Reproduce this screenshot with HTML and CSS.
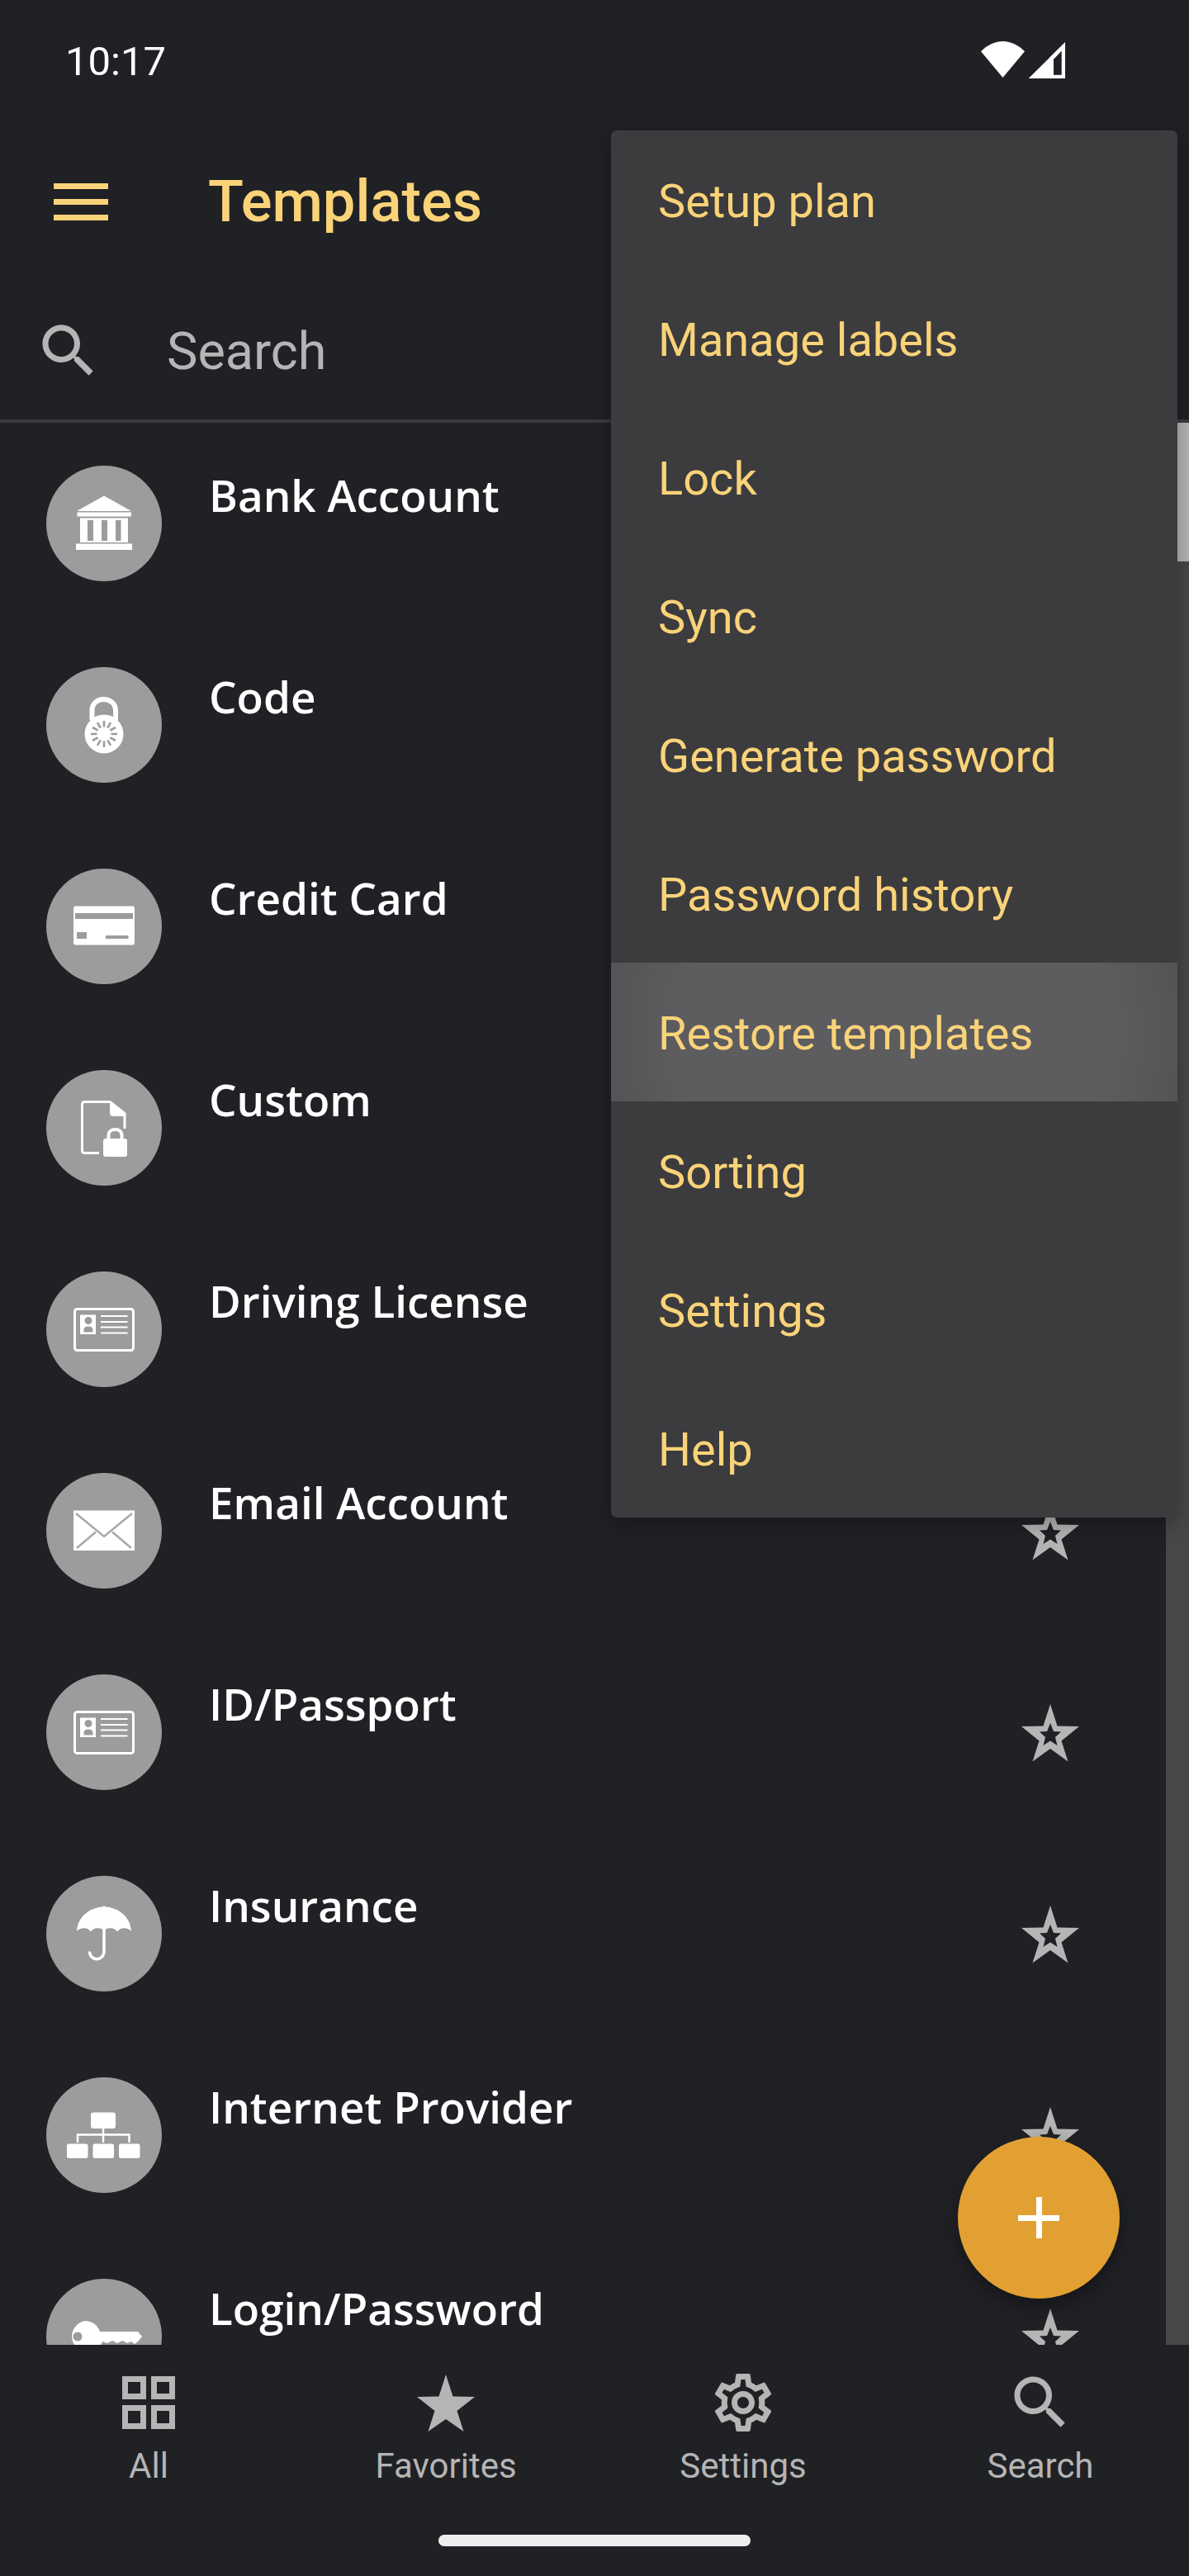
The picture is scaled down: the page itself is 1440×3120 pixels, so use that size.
FILE: index.html
```html
<!DOCTYPE html>
<html lang="en">
<head>
<meta charset="utf-8">
<title>Templates</title>
<link rel="stylesheet" href="styles.css">
</head>
<body>
<svg class="defs" width="0" height="0" aria-hidden="true">
  <symbol id="star-o" viewBox="0 0 70 70">
    <path fill-rule="evenodd" d="M35 0 43.5 26.5 70 27 48.5 44.5 56.5 69.5 35 54 13.5 69.5 21.5 44.5 0 27 26.5 26.5ZM35 23 31 33 22 33.5 29 40 26.5 50 35 44.5 43.5 50 41 40 48 33.5 39 33Z"/>
  </symbol>
  <symbol id="idcard" viewBox="0 0 140 140">
    <rect x="34.5" y="45.5" width="71" height="50" rx="3" fill="none" stroke="#fff" stroke-width="3"/>
    <rect x="41" y="52.5" width="19" height="23.5" fill="#fff"/>
    <circle cx="51" cy="59.5" r="4.5" fill="#9c9c9c"/>
    <path d="M45.5 73.5v-3c0-2.500 2.500-4 5.500-4s5.500 1.500 5.500 4v3z" fill="#9c9c9c"/>
    <path d="M66 54h32.500M66 61h32.500M66 67.500h32.500M66 74.500h32.500" stroke="#fff" stroke-width="2.200" fill="none"/>
  </symbol>
</svg>

<div class="app">
  <div class="statusbar">
    <span class="time">10:17</span>
    <svg class="status-icons" width="104" height="46" viewBox="0 0 104 46">
      <path d="M2 12.300C9 5 18.500 0 28.500 0S48 5 55 12.300L28.500 44Z" fill="#fff"/>
      <path fill-rule="evenodd" d="M59.700 45 104 1V45ZM90 21.700V40.700H99.700V11.700Z" fill="#fff"/>
    </svg>
  </div>

  <header class="toolbar">
    <span class="hamburger"><i></i><i></i><i></i></span>
    <h1 class="title">Templates</h1>
  </header>

  <div class="searchbar">
    <svg class="search-icon" width="84" height="84" viewBox="0 0 24 24"><path d="M15.500 14h-.79l-.28-.27C15.410 12.590 16 11.110 16 9.500 16 5.910 13.090 3 9.500 3S3 5.910 3 9.500 5.910 16 9.500 16c1.610 0 3.090-.59 4.230-1.570l.27.28v.79l5 4.990L20.490 19l-4.990-5zm-6 0C7.010 14 5 11.990 5 9.500S7.010 5 9.500 5 14 7.010 14 9.500 11.990 14 9.500 14z"/></svg>
    <span class="search-text">Search</span>
  </div>

  <main class="list">
    <div class="scrolltrack"><div class="scrollthumb"></div></div>

    <div class="row">
      <span class="avatar"><svg width="140" height="140" viewBox="0 0 140 140">
        <path d="M70 36.500 103 55H37Z" fill="#fff"/>
        <rect x="37.500" y="56.500" width="65.500" height="5" fill="#fff"/>
        <path d="M41 63.500H99V93H41ZM50 66V91H57V66ZM67 66V91H74V66ZM84 66V91H90.500V66Z" fill="#fff" fill-rule="evenodd"/>
        <rect x="36" y="94.500" width="68" height="7.500" fill="#fff"/>
      </svg></span>
      <span class="name">Bank Account</span>
      <svg class="star" width="70" height="70"><use href="#star-o"/></svg>
    </div>

    <div class="row">
      <span class="avatar"><svg width="140" height="140" viewBox="0 0 140 140">
        <path d="M55.500 64V52.500C55.500 44 62 39 69.500 39S84 44 84 52.500V64" fill="none" stroke="#fff" stroke-width="6"/>
        <circle cx="70" cy="81" r="23.500" fill="#fff"/>
        <g stroke="#9c9c9c" stroke-width="2.600" fill="none">
          <path d="M70 65v7.500M70 89.500V97M54 81h7.500M78.500 81H86M62 67.100l3.700 6.500M74.300 88.400l3.700 6.500M56.100 73l6.500 3.700M77.400 85.300l6.500 3.700M78 67.100l-3.700 6.500M65.700 88.400 62 94.900M83.900 73l-6.500 3.700M62.600 85.300 56.100 89"/>
        </g>
      </svg></span>
      <span class="name">Code</span>
      <svg class="star" width="70" height="70"><use href="#star-o"/></svg>
    </div>

    <div class="row">
      <span class="avatar"><svg width="140" height="140" viewBox="0 0 140 140">
        <rect x="33" y="45.500" width="74" height="47" rx="2.500" fill="#fff"/>
        <rect x="35" y="54" width="70" height="7" fill="#9c9c9c"/>
        <rect x="37" y="77" width="12" height="8" fill="#9c9c9c"/>
        <rect x="72" y="81" width="27.500" height="4" fill="#9c9c9c"/>
      </svg></span>
      <span class="name">Credit Card</span>
      <svg class="star" width="70" height="70"><use href="#star-o"/></svg>
    </div>

    <div class="row">
      <span class="avatar"><svg width="140" height="140" viewBox="0 0 140 140">
        <path d="M64 100.500H46.500C44.500 100.500 43.500 99.500 43.500 97.500V41.500C43.500 39.500 44.500 38.500 46.500 38.500H77M95 55V71" fill="none" stroke="#fff" stroke-width="3"/>
        <path d="M77 37.500H78.500L96.500 52V56H81C78.500 56 77 54.500 77 52Z" fill="#fff"/>
        <rect x="69" y="83" width="29" height="22" rx="3" fill="#fff"/>
        <path d="M75.500 84V79C75.500 74.500 79 72 83.500 72S91.500 74.500 91.500 79V84" fill="none" stroke="#fff" stroke-width="4"/>
      </svg></span>
      <span class="name">Custom</span>
      <svg class="star" width="70" height="70"><use href="#star-o"/></svg>
    </div>

    <div class="row">
      <span class="avatar"><svg width="140" height="140"><use href="#idcard"/></svg></span>
      <span class="name">Driving License</span>
      <svg class="star" width="70" height="70"><use href="#star-o"/></svg>
    </div>

    <div class="row">
      <span class="avatar"><svg width="140" height="140" viewBox="0 0 140 140">
        <rect x="33" y="45.500" width="74" height="48.500" fill="#fff"/>
        <path d="M36 49 70 77 104 49M37 91 60 71.500M103 91 80 71.500" fill="none" stroke="#a8a8a8" stroke-width="2.500"/>
      </svg></span>
      <span class="name">Email Account</span>
      <svg class="star" width="70" height="70"><use href="#star-o"/></svg>
    </div>

    <div class="row">
      <span class="avatar"><svg width="140" height="140"><use href="#idcard"/></svg></span>
      <span class="name">ID/Passport</span>
      <svg class="star" width="70" height="70"><use href="#star-o"/></svg>
    </div>

    <div class="row">
      <span class="avatar"><svg width="140" height="140" viewBox="0 0 140 140">
        <path d="M37 67C38 50 52 38.500 68.500 37.500L70 36 71.500 37.500C88 38.500 102 50 103 67 98 62 90 62 86.500 67.500 82 62 74 62 70 66.500 66 62 58 62 53.500 67.500 50 62 42 62 37 67Z" fill="#fff"/>
        <path d="M70 64V92.500A8.800 8.800 0 0 1 52.500 93" fill="none" stroke="#fff" stroke-width="3.500" stroke-linecap="round"/>
      </svg></span>
      <span class="name">Insurance</span>
      <svg class="star" width="70" height="70"><use href="#star-o"/></svg>
    </div>

    <div class="row">
      <span class="avatar"><svg width="140" height="140" viewBox="0 0 140 140">
        <rect x="54" y="42.500" width="30" height="19.500" rx="3" fill="#fff"/>
        <rect x="25" y="80.500" width="25.500" height="17.500" rx="2.500" fill="#fff"/>
        <rect x="56.500" y="80.500" width="25.500" height="17.500" rx="2.500" fill="#fff"/>
        <rect x="88" y="80.500" width="25.500" height="17.500" rx="2.500" fill="#fff"/>
        <path d="M69 62V79M38 79V69.500H100.500V79" fill="none" stroke="#fff" stroke-width="2.500"/>
      </svg></span>
      <span class="name">Internet Provider</span>
      <svg class="star" width="70" height="70"><use href="#star-o"/></svg>
    </div>

    <div class="row">
      <span class="avatar"><svg width="140" height="140" viewBox="0 0 140 140">
        <path fill-rule="evenodd" d="M47 51A19 19 0 0 1 65 64H111L116 70 111 76 107 79 103 76 98 78 92 75 86 78 80 75 74 78 68 76A19 19 0 1 1 47 51ZM38 64.500A5.500 5.500 0 1 0 38 75.500 5.500 5.500 0 1 0 38 64.500Z" fill="#fff"/>
      </svg></span>
      <span class="name">Login/Password</span>
      <svg class="star" width="70" height="70"><use href="#star-o"/></svg>
    </div>
  </main>

  <nav class="tabbar">
    <div class="tab">
      <svg class="tab-icon" width="84" height="84" viewBox="0 0 84 84">
        <path fill-rule="evenodd" d="M10 10H39V38H10ZM17 17V31H32V17ZM45 10H74V38H45ZM52 17V31H67V17ZM10 45H39V74H10ZM17 52V67H32V52ZM45 45H74V74H45ZM52 52V67H67V52Z"/>
      </svg>
      <span class="tab-label">All</span>
    </div>
    <div class="tab">
      <svg class="tab-icon" width="84" height="84" viewBox="0 0 84 84">
        <path d="M42 8 50.500 34.500 77 35 55.500 52 63.500 77 42 62 20.500 77 28.500 52 7 35 33.500 34.500Z"/>
      </svg>
      <span class="tab-label">Favorites</span>
    </div>
    <div class="tab">
      <svg class="tab-icon" width="84" height="84" viewBox="0 0 24 24"><path d="M19.430 12.980c.04-.32.07-.64.07-.98 0-.34-.03-.66-.07-.98l2.110-1.650c.19-.15.24-.42.12-.64l-2-3.460c-.09-.16-.26-.25-.44-.25-.06 0-.12.01-.17.03l-2.490 1c-.52-.4-1.080-.73-1.690-.98l-.38-2.650C14.460 2.180 14.250 2 14 2h-4c-.25 0-.46.18-.49.42l-.38 2.650c-.61.25-1.170.59-1.690.98l-2.490-1c-.06-.02-.12-.03-.18-.03-.17 0-.34.09-.43.25l-2 3.460c-.13.22-.07.49.12.64l2.110 1.650c-.04.32-.07.65-.07.98 0 .33.03.66.07.98l-2.110 1.650c-.19.15-.24.42-.12.64l2 3.460c.09.16.26.25.44.25.06 0 .12-.01.17-.03l2.490-1c.52.4 1.080.73 1.690.98l.38 2.650c.03.24.24.42.49.42h4c.25 0 .46-.18.49-.42l.38-2.650c.61-.25 1.170-.59 1.690-.98l2.490 1c.06.02.12.03.18.03.17 0 .34-.09.43-.25l2-3.460c.12-.22.07-.49-.12-.64l-2.110-1.650zm-1.980-1.710c.04.31.05.52.05.73 0 .21-.02.43-.05.73l-.14 1.130.89.7 1.080.84-.7 1.210-1.270-.51-1.040-.42-.9.68c-.43.32-.84.56-1.250.73l-1.060.43-.16 1.130-.2 1.350h-1.400l-.19-1.350-.16-1.130-1.060-.43c-.43-.18-.83-.41-1.230-.71l-.91-.7-1.060.43-1.270.51-.7-1.210 1.080-.84.89-.7-.14-1.130c-.03-.31-.05-.54-.05-.74s.02-.43.05-.73l.14-1.130-.89-.7-1.080-.84.7-1.210 1.270.51 1.040.42.9-.68c.43-.32.84-.56 1.250-.73l1.060-.43.16-1.130.2-1.350h1.390l.19 1.350.16 1.130 1.060.43c.43.18.83.41 1.230.71l.91.7 1.060-.43 1.270-.51.7 1.210-1.070.85-.89.7.14 1.130zM12 8c-2.210 0-4 1.790-4 4s1.790 4 4 4 4-1.790 4-4-1.790-4-4-4zm0 6c-1.100 0-2-.9-2-2s.9-2 2-2 2 .9 2 2-.9 2-2 2z"/></svg>
      <span class="tab-label">Settings</span>
    </div>
    <div class="tab">
      <svg class="tab-icon" width="84" height="84" viewBox="0 0 24 24"><path d="M15.500 14h-.79l-.28-.27C15.410 12.590 16 11.110 16 9.500 16 5.910 13.090 3 9.500 3S3 5.910 3 9.500 5.910 16 9.500 16c1.610 0 3.090-.59 4.230-1.570l.27.28v.79l5 4.990L20.490 19l-4.990-5zm-6 0C7.010 14 5 11.990 5 9.500S7.010 5 9.500 5 14 7.010 14 9.500 11.990 14 9.500 14z"/></svg>
      <span class="tab-label">Search</span>
    </div>
    <div class="home-indicator"></div>
  </nav>

  <button class="fab" type="button" aria-label="Add"><span class="plus"></span></button>

  <ul class="menu">
    <li class="menu-item">Setup plan</li>
    <li class="menu-item">Manage labels</li>
    <li class="menu-item">Lock</li>
    <li class="menu-item">Sync</li>
    <li class="menu-item">Generate password</li>
    <li class="menu-item">Password history</li>
    <li class="menu-item is-pressed">Restore templates</li>
    <li class="menu-item">Sorting</li>
    <li class="menu-item">Settings</li>
    <li class="menu-item">Help</li>
  </ul>
</div>
</body>
</html>
```

FILE: styles.css
```css
* { box-sizing: border-box; }
html, body { margin: 0; padding: 0; background: #202125; }
.defs { position: absolute; }
.app {
  position: relative;
  width: 1440px;
  height: 3120px;
  overflow: hidden;
  display: flex;
  flex-direction: column;
  background: #202125;
  font-family: Roboto, sans-serif;
}

.statusbar {
  height: 146px;
  flex: none;
  display: flex;
  align-items: flex-start;
  justify-content: space-between;
  padding: 46px 150px 0 79px;
}
.time { color: #fff; font-size: 49px; line-height: 58px; }
.status-icons { margin-top: 4px; }

.toolbar {
  height: 196px;
  flex: none;
  display: flex;
  align-items: center;
  padding-left: 65px;
}
.hamburger {
  width: 66px;
  height: 45px;
  display: flex;
  flex-direction: column;
  justify-content: space-between;
}
.hamburger i { display: block; height: 7px; background: #fad379; }
.title {
  margin: 0 0 0 121px;
  color: #fad379;
  font-size: 70.5px;
  font-weight: 500;
  line-height: 84px;
}

.searchbar {
  height: 166px;
  flex: none;
  display: flex;
  align-items: center;
  padding-left: 41px;
}
.search-icon { fill: #b5b5b5; }
.search-text { margin: 2px 0 0 77px; color: #b5b5b5; font-size: 63px; line-height: 70px; }

.list {
  position: relative;
  flex: 1;
  min-height: 0;
  overflow: hidden;
  border-top: 4px solid #3b3c40;
  padding-top: 52px;
}
.scrolltrack {
  position: absolute;
  top: 0;
  right: 0;
  bottom: 0;
  width: 28px;
  background: #47484a;
}
.scrollthumb { height: 168px; background: #b5b5b5; }

.row {
  height: 244px;
  display: flex;
  align-items: flex-start;
  padding: 0 133px 0 56px;
}
.avatar {
  width: 140px;
  height: 140px;
  flex: none;
  border-radius: 50%;
  background: #9c9c9c;
  overflow: hidden;
}
.avatar svg { display: block; }
.name {
  flex: 1;
  margin: 0 0 0 57px;
  color: #fff;
  font-family: "Open Sans", "Noto Sans", sans-serif;
  font-size: 53px;
  font-weight: 600;
  line-height: 72px;
}
.star { flex: none; margin-top: 36px; fill: #b5b5b5; }

.tabbar {
  position: relative;
  height: 280px;
  flex: none;
  display: grid;
  grid-template-columns: repeat(4, 1fr);
  background: #202125;
}
.tab { display: flex; flex-direction: column; align-items: center; padding-top: 28px; }
.tab-icon { fill: #b5b5b5; display: block; }
.tab-label { color: #b5b5b5; font-size: 42px; line-height: 50px; margin-top: 10px; }
.home-indicator {
  position: absolute;
  left: 531px;
  top: 230px;
  width: 378px;
  height: 14px;
  border-radius: 7px;
  background: #eee;
}

.fab {
  position: absolute;
  left: 1160px;
  top: 2588px;
  width: 196px;
  height: 196px;
  padding: 0;
  border: 0;
  border-radius: 50%;
  background: #e2a033;
  box-shadow: 0 10px 24px rgba(0, 0, 0, .35);
  display: flex;
  align-items: center;
  justify-content: center;
}
.plus {
  position: relative;
  display: block;
  width: 50px;
  height: 50px;
}
.plus::before, .plus::after { content: ""; position: absolute; background: #fff; }
.plus::before { left: 0; right: 0; top: 21.5px; height: 7px; }
.plus::after { top: 0; bottom: 0; left: 21.5px; width: 7px; }

.menu {
  position: absolute;
  left: 740px;
  top: 158px;
  width: 686px;
  margin: 0;
  padding: 0;
  list-style: none;
  border-radius: 7px;
  overflow: hidden;
  background: #3c3c3e;
  box-shadow: 0 8px 28px rgba(0, 0, 0, .3);
}
.menu-item {
  height: 168px;
  display: flex;
  align-items: center;
  padding: 4px 0 0 57px;
  color: #fad379;
  font-size: 56px;
}
.is-pressed {
  background: radial-gradient(ellipse 370px 400px at 50% 50%, #5d5d5f 70%, #525254 100%);
}
```
